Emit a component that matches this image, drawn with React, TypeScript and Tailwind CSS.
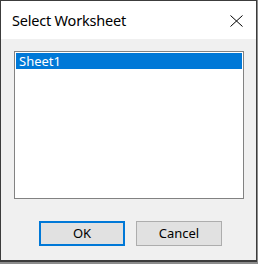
export default function App() {
  return (
    <div className="w-[258px] h-[264px] bg-[#8c8c8c] pr-[1px] pb-[2px] flex">
      <div className="flex-1 flex flex-col border border-b-2 border-[#3c3c3c] bg-[#f0f0f0] font-['Noto_Sans',sans-serif]">
        {/* title bar */}
        <div className="h-[38px] bg-white flex items-center pl-[11px] pr-[13px]">
          <span className="flex-1 text-[14.5px] tracking-[-0.2px] text-black leading-none pt-[1px]">Select Worksheet</span>
          <svg width="13" height="12" viewBox="0 0 13 12" className="mt-[1px]">
            <path d="M0.5 0.5 L12.5 11.5 M12.5 0.5 L0.5 11.5" stroke="#000" strokeWidth="1" fill="none" />
          </svg>
        </div>

        {/* list */}
        <div className="mt-[12px] ml-[13px] w-[230px] h-[148px] border border-[#828282] bg-white p-[1px]">
          <div className="h-[16px] bg-[#0078d7] text-white text-[13px] leading-[16px] pl-[3px]">Sheet1</div>
        </div>

        {/* buttons */}
        <div className="mt-[22px] ml-[38px] flex gap-[11px]">
          <button className="w-[86px] h-[25px] border-2 border-[#0078d7] bg-[#e1e1e1] text-[13px] text-black leading-none">
            OK
          </button>
          <button className="w-[86px] h-[25px] border border-[#adadad] bg-[#e1e1e1] text-[13px] text-black leading-none">
            Cancel
          </button>
        </div>
      </div>
    </div>
  );
}
